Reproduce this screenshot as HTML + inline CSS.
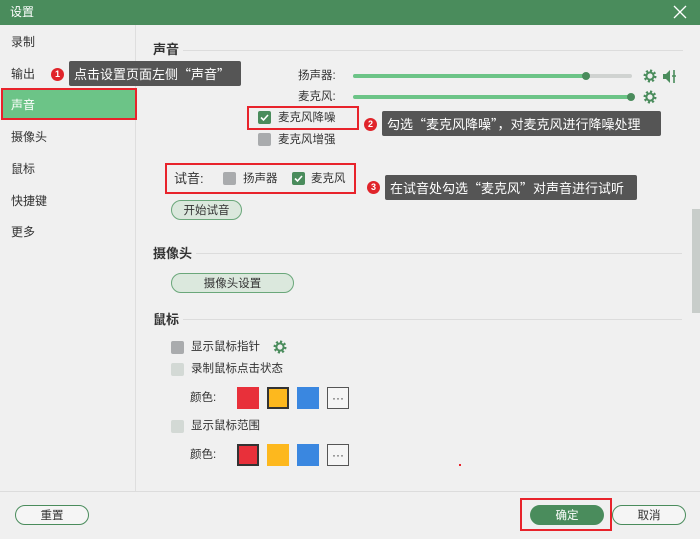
<!DOCTYPE html>
<html><head><meta charset="utf-8"><style>
*{margin:0;padding:0;box-sizing:border-box}
body{width:700px;height:539px;background:#f0f0f0;position:relative;overflow:hidden;font-family:"Liberation Sans","Noto Sans CJK SC",sans-serif;font-size:12px;color:#333}
.a{position:absolute;white-space:nowrap}
.t{line-height:16px}
.title{left:0;top:0;width:700px;height:25px;background:#4a8c5c}
.side{font-size:12px;color:#333}
.h{font-weight:bold;font-size:13px;color:#333}
.ln{height:1px;background:#dcdcdc}
.cb{width:13px;height:13px;border-radius:2px}
.g{background:#4a8c5c}
.gr{background:#a9abad}
.lt{background:#d3d9d5}
.red{border:2px solid #e8232b}
.call{background:#555;color:#fff;font-size:13px;line-height:25px;padding-left:5px;border-radius:2px;font-family:"Noto Sans CJK SC",sans-serif}
.num{width:13px;height:13px;border-radius:50%;background:#e0242a;color:#fff;font-size:9px;text-align:center;line-height:13px;font-weight:bold}
.btn{border:1.5px solid #6aa77a;border-radius:10px;background:#dbe8dd;display:flex;align-items:center;justify-content:center;font-size:11.5px;color:#333}
.sw{width:22px;height:22px}
.more{border:1px solid #555;background:#f5f5f5;display:flex;align-items:center;justify-content:center;font-size:12px}
</style></head><body>
<div class="a title"></div>
<div class="a t" style="left:10px;top:4px;color:#fff;font-size:12px">设置</div>
<svg class="a" style="left:673px;top:5px" width="14" height="14"><path d="M1 1L13 13M13 1L1 13" stroke="#fff" stroke-width="1.3"/></svg>

<div class="a" style="left:135px;top:25px;width:1px;height:466px;background:#dedede"></div>
<div class="a ln" style="left:0;top:491px;width:700px"></div>

<div class="a t side" style="left:11px;top:34px">录制</div>
<div class="a t side" style="left:11px;top:66px">输出</div>
<div class="a" style="left:2px;top:89px;width:133px;height:29px;background:#6cc487"></div>
<div class="a red" style="left:1px;top:88px;width:136px;height:32px"></div>
<div class="a t" style="left:11px;top:97px;color:#fff">声音</div>
<div class="a t side" style="left:11px;top:129px">摄像头</div>
<div class="a t side" style="left:11px;top:161px">鼠标</div>
<div class="a t side" style="left:11px;top:193px">快捷键</div>
<div class="a t side" style="left:11px;top:224px">更多</div>

<div class="a num" style="left:51px;top:68px">1</div>
<div class="a call" style="left:69px;top:61px;width:172px">点击设置页面左侧“声音”</div>

<div class="a t h" style="left:153px;top:42px">声音</div>
<div class="a ln" style="left:183px;top:50px;width:500px"></div>

<div class="a t" style="left:298px;top:68px;font-size:11.5px">扬声器:</div>
<div class="a" style="left:353px;top:74px;width:279px;height:4px;border-radius:2px;background:#d0d3d1"></div>
<div class="a" style="left:353px;top:74px;width:234px;height:4px;border-radius:2px;background:#6cc487"></div>
<div class="a" style="left:582px;top:72px;width:8px;height:8px;border-radius:50%;background:#4a8c5c"></div>
<div class="a t" style="left:298px;top:89px;font-size:11.5px">麦克风:</div>
<div class="a" style="left:353px;top:95px;width:279px;height:4px;border-radius:2px;background:#6cc487"></div>
<div class="a" style="left:627px;top:93px;width:8px;height:8px;border-radius:50%;background:#4a8c5c"></div>
<svg class="a" style="left:643px;top:69px" width="14" height="14" viewBox="0 0 14 14"><circle cx="7" cy="7" r="5" fill="none" stroke="#4a8c5c" stroke-width="3" stroke-dasharray="2 1.9"/><circle cx="7" cy="7" r="3.6" fill="none" stroke="#4a8c5c" stroke-width="2"/></svg>
<svg class="a" style="left:643px;top:90px" width="14" height="14" viewBox="0 0 14 14"><circle cx="7" cy="7" r="5" fill="none" stroke="#4a8c5c" stroke-width="3" stroke-dasharray="2 1.9"/><circle cx="7" cy="7" r="3.6" fill="none" stroke="#4a8c5c" stroke-width="2"/></svg>
<svg class="a" style="left:662px;top:69px" width="16" height="15"><path d="M1 5H4L8 1V14L4 10H1Z" fill="#4a8c5c"/><path d="M12 1V14M10 7H14" stroke="#4a8c5c" stroke-width="1.6"/></svg>

<div class="a cb g" style="left:258px;top:111px"></div>
<svg class="a" style="left:258px;top:111px" width="13" height="13"><path d="M3 6.5L5.5 9L10 4" stroke="#fff" stroke-width="1.6" fill="none"/></svg>
<div class="a t" style="left:278px;top:110px;font-size:11.5px">麦克风降噪</div>
<div class="a red" style="left:247px;top:106px;width:112px;height:24px"></div>
<div class="a cb gr" style="left:258px;top:133px"></div>
<div class="a t" style="left:278px;top:132px;font-size:11.5px">麦克风增强</div>

<div class="a num" style="left:364px;top:118px">2</div>
<div class="a call" style="left:382px;top:111px;width:279px">勾选“麦克风降噪”，对麦克风进行降噪处理</div>

<div class="a red" style="left:165px;top:163px;width:191px;height:31px"></div>
<div class="a t" style="left:174px;top:171px;font-size:13px">试音:</div>
<div class="a cb gr" style="left:223px;top:172px"></div>
<div class="a t" style="left:243px;top:171px;font-size:11.5px">扬声器</div>
<div class="a cb g" style="left:292px;top:172px"></div>
<svg class="a" style="left:292px;top:172px" width="13" height="13"><path d="M3 6.5L5.5 9L10 4" stroke="#fff" stroke-width="1.6" fill="none"/></svg>
<div class="a t" style="left:311px;top:171px;font-size:11.5px">麦克风</div>

<div class="a num" style="left:367px;top:181px">3</div>
<div class="a call" style="left:385px;top:175px;width:252px">在试音处勾选“麦克风”对声音进行试听</div>

<div class="a btn" style="left:171px;top:200px;width:71px;height:20px">开始试音</div>

<div class="a" style="left:692px;top:209px;width:8px;height:104px;background:#c8cdca"></div>

<div class="a t h" style="left:153px;top:246px">摄像头</div>
<div class="a ln" style="left:196px;top:253px;width:486px"></div>
<div class="a btn" style="left:171px;top:273px;width:123px;height:20px">摄像头设置</div>

<div class="a t h" style="left:153px;top:312px">鼠标</div>
<div class="a ln" style="left:183px;top:319px;width:499px"></div>

<div class="a cb gr" style="left:171px;top:341px"></div>
<div class="a t" style="left:191px;top:339px;font-size:11.5px">显示鼠标指针</div>
<svg class="a" style="left:273px;top:340px" width="14" height="14" viewBox="0 0 14 14"><circle cx="7" cy="7" r="5" fill="none" stroke="#4a8c5c" stroke-width="3" stroke-dasharray="2 1.9"/><circle cx="7" cy="7" r="3.6" fill="none" stroke="#4a8c5c" stroke-width="2"/></svg>
<div class="a cb lt" style="left:171px;top:363px"></div>
<div class="a t" style="left:191px;top:361px;font-size:11.5px">录制鼠标点击状态</div>
<div class="a t" style="left:190px;top:390px;font-size:11.5px">颜色:</div>
<div class="a sw" style="left:237px;top:387px;background:#e8303a"></div>
<div class="a sw" style="left:267px;top:387px;background:#fdb81e;border:2px solid #333"></div>
<div class="a sw" style="left:297px;top:387px;background:#3a87e0"></div>
<div class="a sw more" style="left:327px;top:387px">···</div>
<div class="a cb lt" style="left:171px;top:420px"></div>
<div class="a t" style="left:191px;top:418px;font-size:11.5px">显示鼠标范围</div>
<div class="a t" style="left:190px;top:447px;font-size:11.5px">颜色:</div>
<div class="a sw" style="left:237px;top:444px;background:#e8303a;border:2px solid #333"></div>
<div class="a sw" style="left:267px;top:444px;background:#fdb81e"></div>
<div class="a sw" style="left:297px;top:444px;background:#3a87e0"></div>
<div class="a sw more" style="left:327px;top:444px">···</div>
<div class="a" style="left:459px;top:464px;width:2px;height:2px;background:#e8232b"></div>

<div class="a btn" style="left:15px;top:505px;width:74px;height:20px;background:#f5f5f5;border-color:#4a8c5c">重置</div>
<div class="a btn" style="left:530px;top:505px;width:74px;height:20px;background:#4a8c5c;border-color:#4a8c5c;color:#fff">确定</div>
<div class="a red" style="left:520px;top:498px;width:92px;height:33px"></div>
<div class="a btn" style="left:612px;top:505px;width:74px;height:20px;background:#f5f5f5;border-color:#4a8c5c">取消</div>
</body></html>
